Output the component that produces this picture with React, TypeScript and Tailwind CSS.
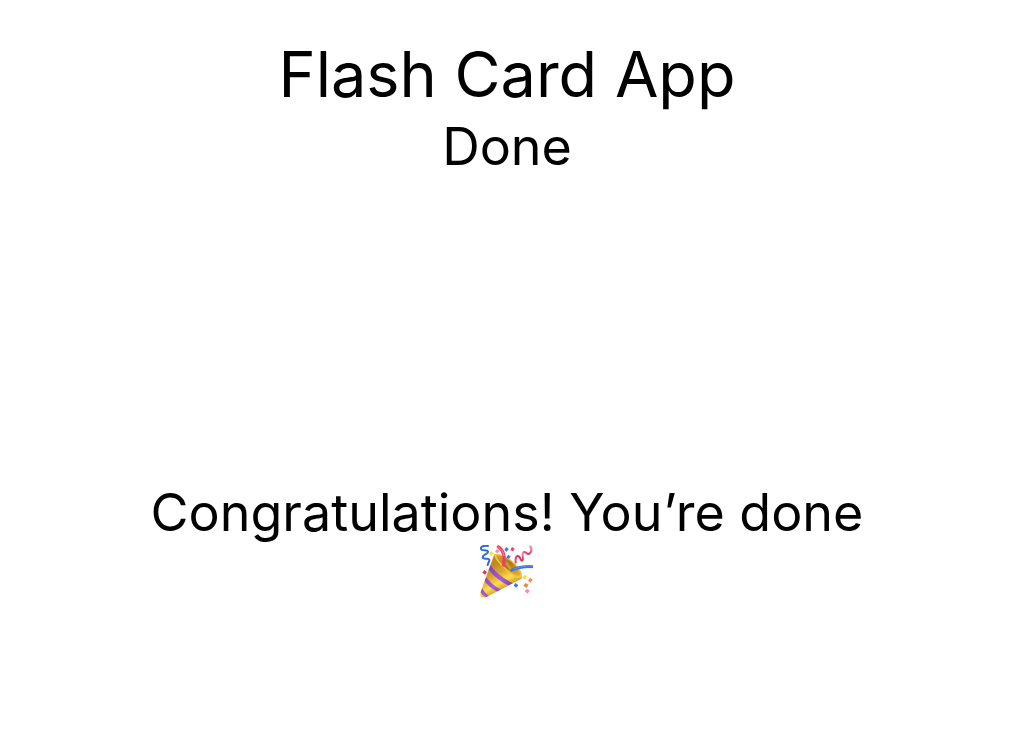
function PartyPopper() {
  return (
    <svg
      role="img"
      aria-label="Party popper"
      viewBox="27 27 159 159"
      className="size-[53px]"
      fill="none"
    >
      <defs>
        <linearGradient id="cone" x1="62" y1="90" x2="105" y2="163" gradientUnits="userSpaceOnUse">
          <stop offset="0" stopColor="#c08a20" />
          <stop offset="0.35" stopColor="#dfa92c" />
          <stop offset="0.65" stopColor="#fbdf50" />
          <stop offset="1" stopColor="#c78a1c" />
        </linearGradient>
        <linearGradient id="mouth" x1="75" y1="60" x2="148" y2="120" gradientUnits="userSpaceOnUse">
          <stop offset="0" stopColor="#d9a32c" />
          <stop offset="0.5" stopColor="#a8741c" />
          <stop offset="1" stopColor="#e9b93a" />
        </linearGradient>
        <linearGradient id="stripe" x1="45" y1="90" x2="115" y2="160" gradientUnits="userSpaceOnUse">
          <stop offset="0" stopColor="#7e3fae" />
          <stop offset="0.6" stopColor="#a95bd8" />
          <stop offset="1" stopColor="#7d3db4" />
        </linearGradient>
        <linearGradient id="pink" x1="134" y1="80" x2="184" y2="35" gradientUnits="userSpaceOnUse">
          <stop offset="0" stopColor="#f34b73" />
          <stop offset="0.3" stopColor="#d92b58" />
          <stop offset="0.5" stopColor="#ff7f9c" />
          <stop offset="0.7" stopColor="#d92b58" />
          <stop offset="1" stopColor="#ff8ba5" />
        </linearGradient>
        <clipPath id="cone-shape">
          <path d="M70 55 L28 170 Q25 182 34 184 Q40 186 48 182 L150 129 Q157 125 152 118 Q120 70 70 55Z" />
        </clipPath>
      </defs>
      <g clipPath="url(#cone-shape)">
        <path d="M20 45h145v150H20z" fill="url(#cone)" />
        <path d="M58 87 Q80 119 126 142 L114 149 Q76 131 53 101Z" fill="url(#stripe)" />
        <path d="M45 122 Q60 145 90 161 L79 167 Q54 154 40 134Z" fill="url(#stripe)" />
        <path d="M33 156 Q40 170 54 180 L46 184 Q33 179 28 168Z" fill="url(#stripe)" />
      </g>
      <path
        d="M71 55 C87 51 113 63 132 82 C149 99 158 117 151 125 C143 131 119 116 100 98 C82 81 67 63 71 55Z"
        fill="#f2c642"
      />
      <path
        d="M76 58 C89 56 111 67 128 84 C143 99 151 114 147 120 C139 122 119 110 103 95 C88 80 74 65 76 58Z"
        fill="url(#mouth)"
      />
      <path d="M98 76 L118 106 L132 114 L113 82Z" fill="#e3b035" opacity="0.6" />
      <path d="M82 33 C95 40 103 59 98 87" stroke="#ef3f68" strokeWidth="10" strokeLinecap="round" />
      <path d="M80 34 C91 37 97 48 99 59" stroke="#ff86a0" strokeWidth="3" strokeLinecap="round" />
      <path d="M119 104 C139 94 159 91 186 92" stroke="#3c75df" strokeWidth="9" />
      <path d="M125 101 C143 92 163 89 186 90" stroke="#6f9df2" strokeWidth="2" />
      <path
        d="M51 30 C39 27 28 32 30 39 C32 46 49 40 51 47 C53 54 34 55 35 64 C37 73 53 64 55 71 C56 77 51 80 50 87"
        stroke="#346ad8"
        strokeWidth="6"
        strokeLinecap="round"
      />
      <path
        d="M134 80 C132 66 137 57 143 61 C149 65 149 76 154 73 C160 69 151 55 157 49 C162 44 168 57 175 53 C181 50 184 40 178 31"
        stroke="url(#pink)"
        strokeWidth="6"
        strokeLinecap="round"
      />
      <path d="M61 46 L68 52 L61 60 L54 53Z" fill="#f5df42" />
      <path d="M78 39 L85 45 L80 52 L72 47Z" fill="#f58ac0" />
      <path d="M106 33 L113 39 L107 47 L100 41Z" fill="#3978e6" />
      <path d="M123 33 L131 38 L126 46 L118 42Z" fill="#e9435f" />
      <path d="M112 56 L119 62 L113 69 L106 64Z" fill="#3978e6" />
      <path d="M133 141 L142 147 L136 155 L128 149Z" fill="#3978e6" />
      <path d="M40 102 L48 108 L42 116 L34 110Z" fill="#d83c59" />
      <path d="M161 116 L169 122 L162 131 L154 125Z" fill="#f3df4e" />
      <path d="M177 125 L185 131 L179 140 L171 134Z" fill="#ef9140" />
      <path d="M164 141 L173 147 L166 156 L157 149Z" fill="#ee8a3b" />
      <path d="M168 158 L176 164 L170 173 L161 166Z" fill="#f58bb8" />
    </svg>
  );
}

export default function App() {
  return (
    <main className="flex min-h-screen flex-col items-center bg-white pt-9 pr-6 pb-9 pl-4 text-center font-['Inter',sans-serif] text-black">
      <h1 className="text-[63px] leading-[76px]">Flash Card App</h1>
      <h2 className="text-[52px] leading-[70px]">Done</h2>
      <div className="mt-[299px] flex flex-col items-center">
        <p className="text-[52px] leading-[64px]">Congratulations! You’re done</p>
        <PartyPopper />
      </div>
    </main>
  );
}
